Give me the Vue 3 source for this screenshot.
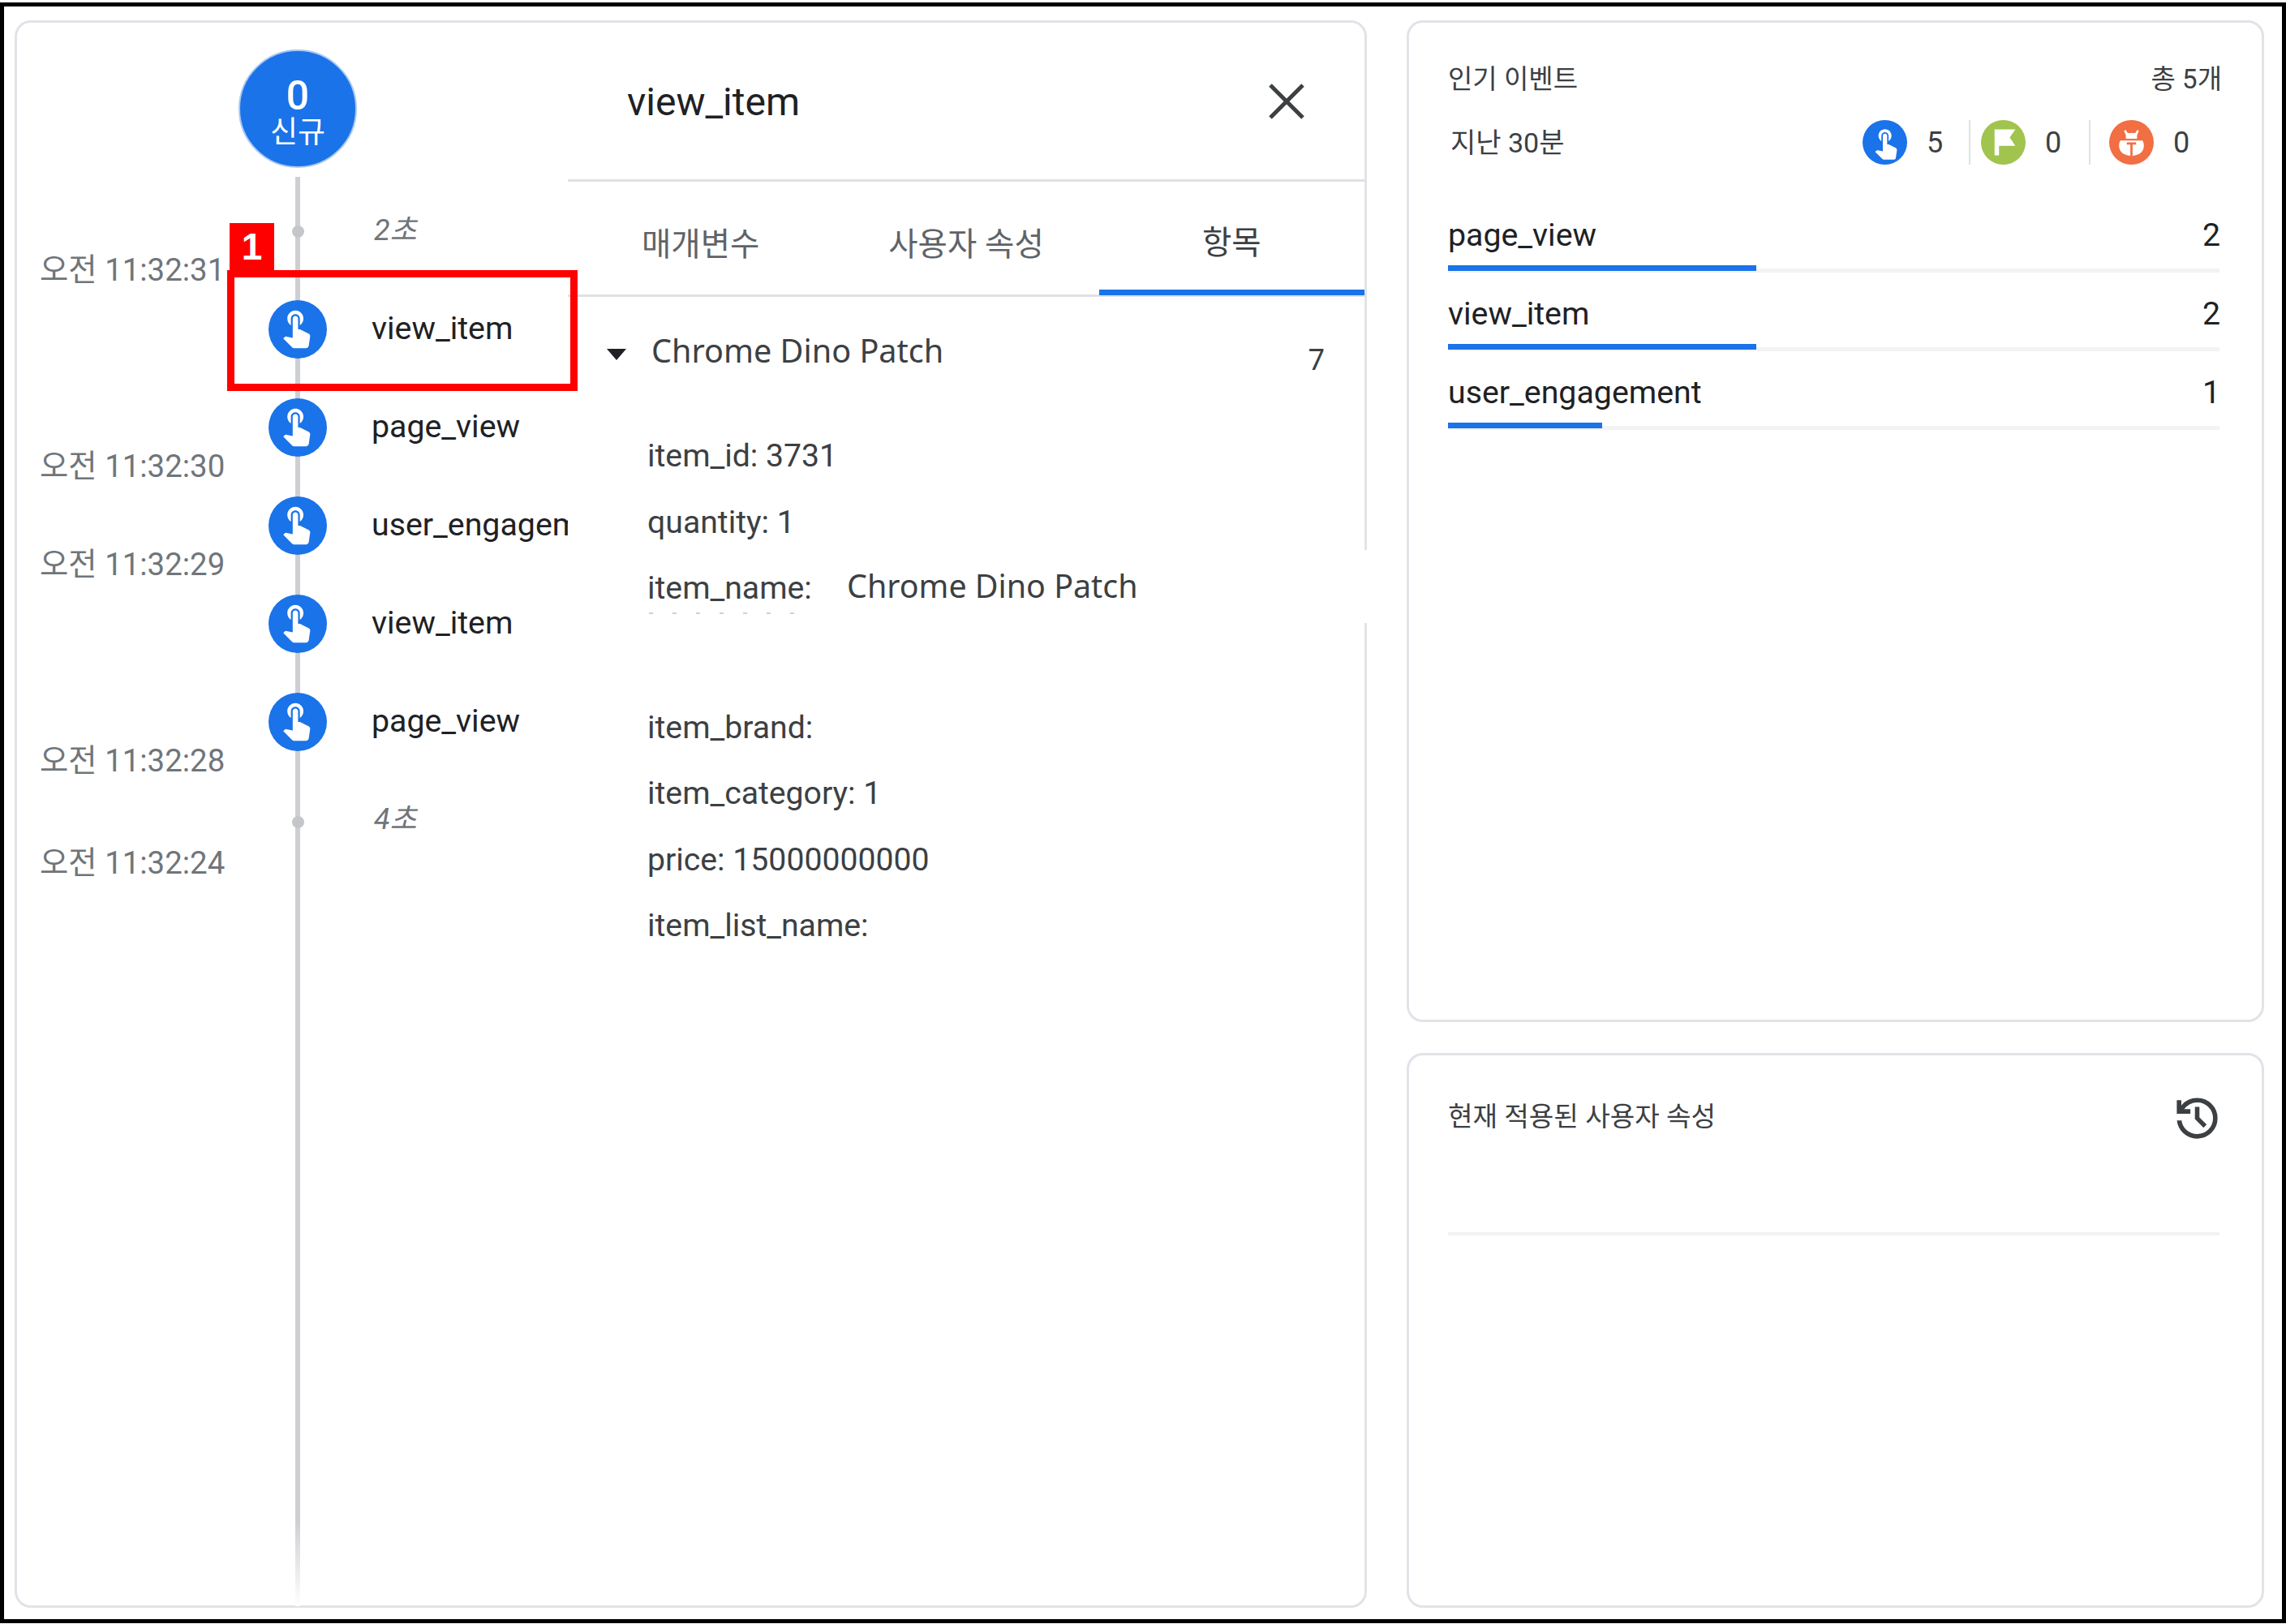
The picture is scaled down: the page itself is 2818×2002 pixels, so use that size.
<script setup>
import { computed } from "vue";

const touchPath = "M9 11.24V7.5C9 6.12 10.12 5 11.5 5S14 6.12 14 7.5v3.74c1.21-.81 2-2.18 2-3.74C16 5.01 13.99 3 11.5 3S7 5.01 7 7.5c0 1.56.79 2.93 2 3.74zm9.84 4.63l-4.54-2.26c-.17-.07-.35-.11-.54-.11H13v-6c0-.83-.67-1.5-1.5-1.5S10 6.67 10 7.5v10.74l-3.43-.72c-.08-.01-.15-.03-.24-.03-.31 0-.59.13-.79.33l-.79.8 4.94 4.94c.27.27.65.44 1.06.44h6.79c.75 0 1.33-.55 1.44-1.28l.75-5.27c.01-.07.02-.14.02-.2 0-.62-.38-1.16-.91-1.38z";

// 时间标签的中心 y，标签高 50
const timeCenters = [
  ["오전 11:32:31", 333],
  ["오전 11:32:30", 575],
  ["오전 11:32:29", 696],
  ["오전 11:32:28", 938],
  ["오전 11:32:24", 1064],
];
const times = computed(() =>
  timeCenters.map(([label, center], i) => ({
    label,
    gap: i === 0 ? center - 53 : center - timeCenters[i - 1][1] - 50,
  }))
);

const events = ["view_item", "page_view", "user_engagement", "view_item", "page_view"];
const tabs = ["매개변수", "사용자 속성", "항목"];
const topEvents = [
  { name: "page_view", count: 2, pct: 40 },
  { name: "view_item", count: 2, pct: 40 },
  { name: "user_engagement", count: 1, pct: 20 },
];
</script>

<template>
  <div class="frame">
    <section class="card stream">
      <div class="timeline">
        <div class="times">
          <div v-for="t in times" :key="t.label" class="time" :style="{ marginTop: t.gap + 'px' }">{{ t.label }}</div>
        </div>
        <div class="events">
          <div class="line"></div>
          <div class="hero">
            <span class="hero-num">0</span>
            <span class="hero-label">신규</span>
          </div>
          <div class="gap gap-first">
            <div class="rail"><i class="dot"></i></div>
            <span class="gap-label">2초</span>
          </div>
          <div v-for="(e, i) in events" :key="i" class="event">
            <div class="rail">
              <svg class="event-icon" viewBox="0.8 1.5 24 24"><path :d="touchPath" fill="#fff" /></svg>
            </div>
            <span class="event-name">{{ e }}</span>
          </div>
          <div class="gap gap-last">
            <div class="rail"><i class="dot"></i></div>
            <span class="gap-label">4초</span>
          </div>
        </div>
      </div>

      <div class="detail">
        <div class="detail-head">
          <span class="detail-title">view_item</span>
          <svg class="close" viewBox="0 0 44 44"><path d="M2 2L42 42M42 2L2 42" stroke="#3c4043" stroke-width="5" fill="none" /></svg>
        </div>
        <div class="tabs">
          <div v-for="(t, i) in tabs" :key="t" class="tab" :class="{ active: i === 2 }">{{ t }}</div>
        </div>
        <div class="item-head">
          <i class="caret"></i>
          <span class="item-title">Chrome Dino Patch</span>
          <span class="item-count">7</span>
        </div>
        <div class="params">
          <div class="param">item_id: 3731</div>
          <div class="param">quantity: 1</div>
          <div class="param name-row">
            item_name:
            <div class="cut"></div>
            <div class="patch">Chrome Dino Patch</div>
          </div>
          <div class="param brand">item_brand:</div>
          <div class="param">item_category: 1</div>
          <div class="param">price: 15000000000</div>
          <div class="param">item_list_name:</div>
        </div>
      </div>

      <div class="callout"></div>
      <div class="callout-num">1</div>
    </section>

    <div class="side">
      <section class="card top">
        <div class="head-row">
          <span>인기 이벤트</span>
          <span class="total">총 5개</span>
        </div>
        <div class="sub-row">
          <span class="sub-label">지난 30분</span>
          <div class="stats">
            <svg class="stat-icon" viewBox="0 0 24 24">
              <circle cx="12" cy="12" r="12" fill="#1a73e8" />
              <path :d="touchPath" fill="#fff" transform="translate(3.1 2.6) scale(.78)" />
            </svg>
            <span class="stat-num">5</span>
            <i class="stat-sep"></i>
            <svg class="stat-icon" viewBox="0 0 24 24">
              <circle cx="12" cy="12" r="12" fill="#a0c44e" />
              <path d="M7.3 5H18.5L15.5 9.4L18.5 13.8H9.7V19H7.3Z" fill="#fff" />
            </svg>
            <span class="stat-num">0</span>
            <i class="stat-sep"></i>
            <svg class="stat-icon" viewBox="0 0 24 24">
              <circle cx="12" cy="12" r="12" fill="#f26e43" />
              <path d="M8.8 5.2L10 7h4l1.2-1.800.8.6L15 8.200V10H9V8.200L8 5.800Z" fill="#fff" />
              <path d="M6 11h12c.6 1.200.8 2.400.6 3.600-.3 2.500-2.300 4.400-6.600 4.700-4.300-.3-6.300-2.200-6.600-4.700-.2-1.200 0-2.400.6-3.600Z" fill="#fff" />
              <path d="M9.500 12.600h5M12 12.600v6.800" stroke="#f26e43" stroke-width="1.200" fill="none" />
            </svg>
            <span class="stat-num">0</span>
          </div>
        </div>
        <div class="bars">
          <div v-for="row in topEvents" :key="row.name" class="bar-row">
            <div class="bar-text">
              <span>{{ row.name }}</span>
              <span class="bar-count">{{ row.count }}</span>
            </div>
            <div class="track">
              <div class="fill" :style="{ width: row.pct + '%' }"></div>
            </div>
          </div>
        </div>
      </section>

      <section class="card props">
        <div class="props-head">
          <span class="props-title">현재 적용된 사용자 속성</span>
          <svg class="history" viewBox="0 -960 960 960">
            <path d="M480-120q-138 0-240.500-91.500T122-440h82q14 104 92.500 172T480-200q117 0 198.500-81.500T760-480q0-117-81.500-198.500T480-760q-69 0-129 32t-101 88h110v80H120v-240h80v94q51-64 124.500-99T480-840q150 0 255 105t105 255q0 150-105 255T480-120Zm112-192L440-464v-216h80v184l128 128-56 56Z" fill="#3c4043" />
          </svg>
        </div>
        <div class="props-rule"></div>
      </section>
    </div>
  </div>
</template>

<style>
body {
  background: #fff;
}
</style>

<style scoped>
.frame {
  box-sizing: border-box;
  width: 2818px;
  height: 1998px;
  margin-top: 3px;
  border: 5px solid #000;
  padding: 17px 22px 14px 13px;
  display: grid;
  grid-template-columns: 1667px 1057px;
  column-gap: 49px;
  background: #fff;
  font-family: Roboto, "Noto Sans CJK KR", sans-serif;
  color: #202124;
}
.card {
  box-sizing: border-box;
  border: 3px solid #e1e3e8;
  border-radius: 20px;
  background: #fff;
}
.stream {
  position: relative;
  height: 1957px;
}
.timeline {
  display: flex;
  padding-left: 28px;
}
.times {
  width: 247px;
  flex: none;
}
.time {
  height: 50px;
  line-height: 50px;
  font-size: 38.400px;
  color: #70757a;
  white-space: nowrap;
}
.events {
  position: relative;
  flex: 1;
  padding-top: 36px;
}
.line {
  position: absolute;
  left: 68px;
  top: 190px;
  width: 6px;
  height: 1762px;
  background: linear-gradient(#cdcfd3 94%, #fff);
}
.hero {
  position: relative;
  box-sizing: border-box;
  width: 146px;
  height: 146px;
  margin: -3px 0 -2px -2px;
  border-radius: 50%;
  background: #1a73e8;
  border: 2px solid #a9c8f3;
  color: #fff;
  display: flex;
  flex-direction: column;
  align-items: center;
  justify-content: center;
}
.hero-num {
  font-size: 50px;
  font-weight: 500;
  line-height: 50px;
  margin-top: 9px;
}
.hero-label {
  font-size: 37px;
  line-height: 42px;
}
.gap,
.event {
  position: relative;
  display: flex;
  align-items: center;
  gap: 20px;
}
.gap {
  height: 40px;
}
.gap-first {
  margin-top: 60px;
  margin-bottom: 40px;
}
.gap-last {
  margin-top: 43px;
}
.event {
  height: 121px;
}
.rail {
  width: 142px;
  flex: none;
  display: flex;
  justify-content: center;
}
.dot {
  width: 15px;
  height: 15px;
  border-radius: 50%;
  background: #c4c6ca;
}
.gap-label {
  font-size: 36px;
  font-style: italic;
  color: #70757a;
  position: relative;
  top: -5px;
  left: 3px;
}
.gap-last .gap-label {
  top: -7px;
}
.event-icon {
  width: 72px;
  height: 72px;
  border-radius: 50%;
  background: #1a73e8;
  box-sizing: border-box;
  padding: 9.500px;
}
.event-name {
  font-size: 39.300px;
  white-space: nowrap;
  position: relative;
  top: -1px;
}

.detail {
  position: absolute;
  left: 679px;
  top: 0;
  right: 0;
  bottom: 0;
  background: #fff;
  border-radius: 0 18px 18px 0;
  display: flex;
  flex-direction: column;
}
.detail-head {
  box-sizing: border-box;
  height: 196px;
  flex: none;
  display: flex;
  align-items: center;
  justify-content: space-between;
  padding: 0 74px 0 73px;
  border-bottom: 3px solid #dfe1e5;
}
.detail-title {
  font-size: 48px;
  position: relative;
  top: 1px;
}
.close {
  width: 44px;
  height: 44px;
  margin-top: 1px;
}
.tabs {
  box-sizing: border-box;
  height: 142px;
  flex: none;
  display: grid;
  grid-template-columns: repeat(3, 1fr);
  border-bottom: 3px solid #dfe1e5;
}
.tab {
  display: flex;
  align-items: center;
  justify-content: center;
  font-size: 39.500px;
  color: #5f6368;
  padding-top: 7px;
}
.tab.active {
  color: #3c4043;
  border-bottom: 7px solid #1a73e8;
  margin-bottom: -1px;
  padding-top: 9px;
}
.item-head {
  display: flex;
  align-items: center;
  margin-top: 38px;
  height: 56px;
  padding: 0 49px 0 48px;
}
.caret {
  width: 0;
  height: 0;
  border-left: 12px solid transparent;
  border-right: 12px solid transparent;
  border-top: 14px solid #202124;
  margin-top: 10px;
}
.item-title {
  margin-left: 31px;
  font-family: "Noto Sans", sans-serif;
  font-size: 39.600px;
  color: #3c4043;
  flex: 1;
}
.item-count {
  font-family: "Noto Sans", sans-serif;
  font-size: 36px;
  color: #3c4043;
  position: relative;
  top: 10px;
}
.params {
  margin-top: 62px;
  padding-left: 98px;
}
.param {
  height: 81.500px;
  line-height: 81.500px;
  font-size: 39.200px;
  color: #3c4043;
  white-space: nowrap;
}
.name-row {
  position: relative;
}
.brand {
  margin-top: 90px;
}
.cut {
  position: absolute;
  left: 2px;
  top: 70px;
  width: 190px;
  height: 2px;
  background: repeating-linear-gradient(90deg, #cfd1d4 0 5px, #fff 5px 29px);
}
.patch {
  position: absolute;
  left: 213px;
  top: -7px;
  width: 655px;
  height: 90px;
  line-height: 88px;
  padding-left: 33px;
  background: #fff;
  font-family: "Noto Sans", sans-serif;
  font-size: 39.400px;
}

.callout {
  position: absolute;
  box-sizing: border-box;
  left: 259px;
  top: 305px;
  width: 432px;
  height: 149px;
  border: 9px solid #f00;
}
.callout-num {
  position: absolute;
  left: 262px;
  top: 247px;
  width: 55px;
  height: 59px;
  background: #f00;
  color: #fff;
  font-family: "Liberation Sans", sans-serif;
  font-weight: 700;
  font-size: 46px;
  line-height: 58px;
  text-align: center;
}

.side {
  display: flex;
  flex-direction: column;
  gap: 38px;
  height: 1957px;
}
.top {
  height: 1235px;
  flex: none;
  padding: 47px 52px 0 48px;
}
.props {
  flex: 1;
  padding: 44px 52px 0 48px;
}
.head-row,
.sub-row,
.props-head,
.bar-text {
  display: flex;
  align-items: center;
  justify-content: space-between;
}
.head-row {
  height: 40px;
  font-size: 33px;
  color: #3c4043;
}
.total {
  margin-right: -3px;
}
.sub-row {
  margin-top: 33px;
  height: 55px;
  font-size: 34px;
  color: #3c4043;
}
.sub-label {
  margin-left: 3px;
  position: relative;
  top: -2px;
}
.stats {
  display: flex;
  align-items: center;
  margin-right: 37px;
  color: #3c4043;
}
.stat-icon {
  width: 55px;
  height: 55px;
}
.stat-num {
  font-size: 36px;
  width: 20px;
  margin-left: 24px;
}
.stat-sep {
  width: 2px;
  height: 55px;
  background: #dfe1e5;
  margin: 0 13px 0 32px;
}
.stat-sep + .stat-icon + .stat-num + .stat-sep {
  margin-left: 34px;
  margin-right: 23px;
}
.bars {
  margin-top: 62px;
}
.bar-row {
  margin-bottom: 26px;
}
.bar-text {
  height: 50px;
  font-size: 39.300px;
  color: #202124;
}
.bar-count {
  margin-right: -1px;
}
.track {
  margin-top: 12px;
  height: 9px;
  background: linear-gradient(#f1f3f4, #f1f3f4) bottom / 100% 5px no-repeat;
}
.fill {
  height: 7px;
  background: #1a73e8;
}
.props-head {
  color: #3c4043;
}
.props-title {
  font-size: 33.200px;
  position: relative;
  top: -5px;
}
.history {
  width: 67px;
  height: 67px;
  margin-right: -6px;
}
.props-rule {
  margin-top: 107px;
  height: 4px;
  background: #f1f3f4;
}
</style>
